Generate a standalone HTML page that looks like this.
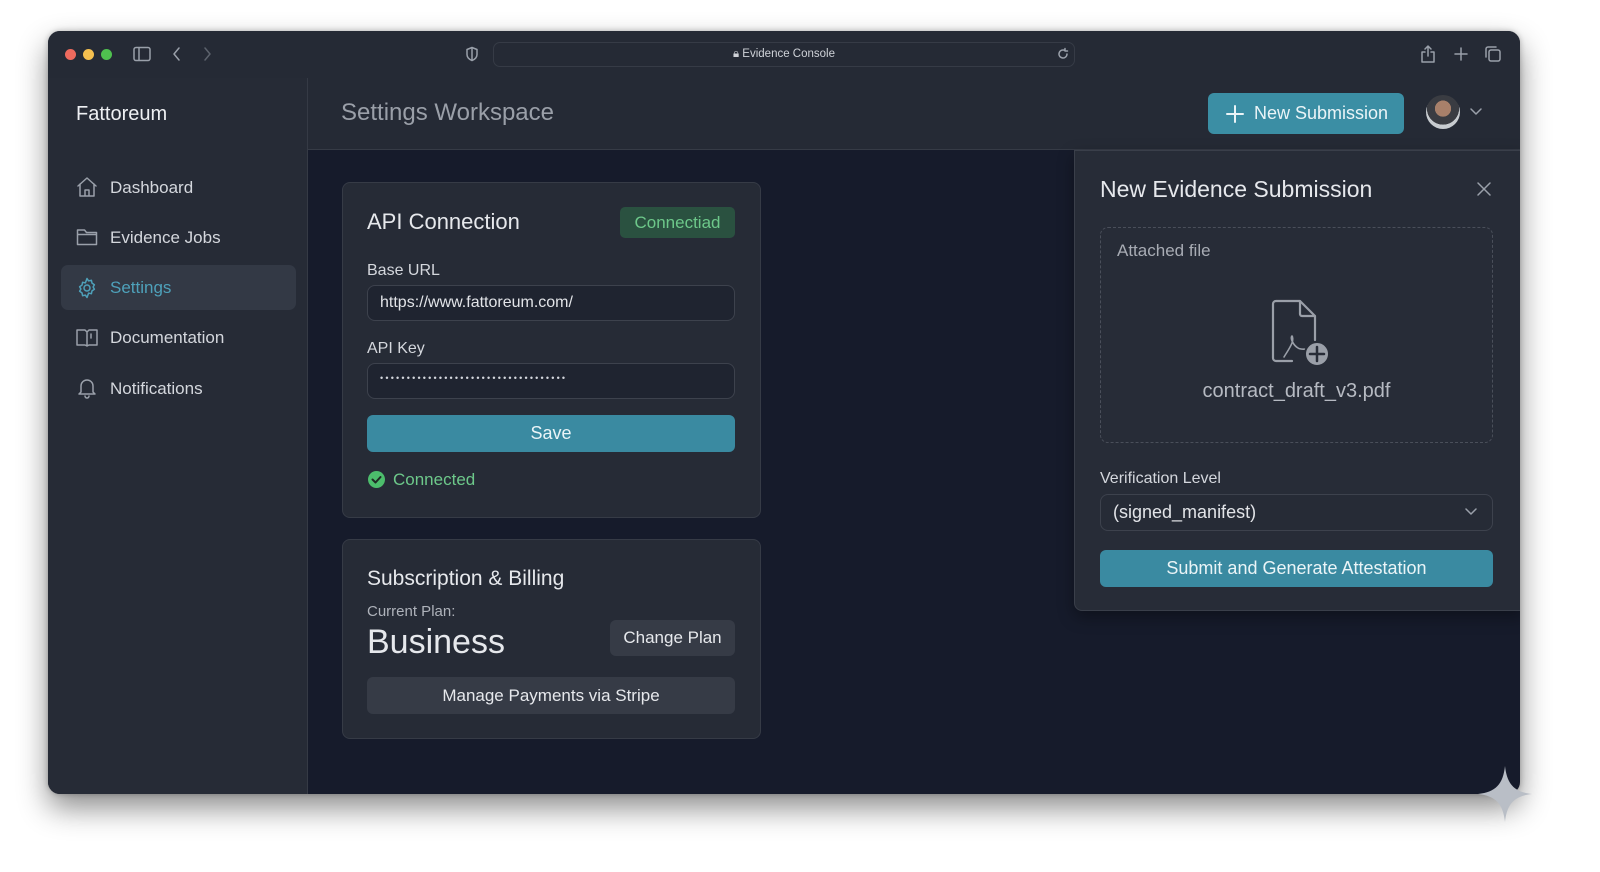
<!DOCTYPE html>
<html><head><meta charset="utf-8"><style>
*{box-sizing:border-box;margin:0;padding:0}
body{width:1600px;height:872px;background:#fff;font-family:"Liberation Sans",sans-serif;position:relative;overflow:hidden}
.a{position:absolute}
.win{left:48px;top:31px;width:1472px;height:763px;border-radius:12px;background:#161b2b;overflow:hidden;box-shadow:0 14px 30px rgba(0,0,0,.45),0 0 6px rgba(0,0,0,.25)}
.t{color:#d4d7dd}
.card{background:#262b36;border:1px solid #363b46;border-radius:8px}
.inp{background:#1f2430;border:1px solid #3d424d;border-radius:8px}
svg{position:absolute;fill:none;stroke:#9aa0aa;stroke-width:1.5;stroke-linecap:round;stroke-linejoin:round}
</style></head><body>
<div class="a win">
 <div class="a" style="left:0;top:0;width:1472px;height:119px;background:#252a35;border-bottom:1px solid #363b46"></div>
 <div class="a" style="left:0;top:47px;width:260px;height:716px;background:#262b36;border-right:1px solid #353a45"></div>
 <div class="a" style="left:17px;top:18px;width:11px;height:11px;border-radius:50%;background:#ee6a5e"></div>
 <div class="a" style="left:35px;top:18px;width:11px;height:11px;border-radius:50%;background:#f4bf4f"></div>
 <div class="a" style="left:53px;top:18px;width:11px;height:11px;border-radius:50%;background:#4fc14f"></div>
 <svg style="left:85px;top:15px" width="18" height="16"><rect x="1" y="1.5" width="16" height="13" rx="2"/><line x1="6" y1="2" x2="6" y2="14"/></svg>
 <svg style="left:123px;top:15px" width="12" height="16"><path d="M8 2L3 8l5 6"/></svg>
 <svg style="left:153px;top:15px" width="12" height="16"><path d="M4 2l5 6-5 6" stroke="#5c626c"/></svg>
 <svg style="left:417px;top:15px" width="14" height="16"><path d="M7 1.5L2 3.5v5c0 3 2.5 5 5 6 2.5-1 5-3 5-6v-5z"/><path d="M7 2v12" /></svg>
 <div class="a" style="left:445px;top:11px;width:582px;height:25px;border:1px solid #363b46;border-radius:7px"></div>
 <div class="a" style="left:445px;top:17px;width:582px;text-align:center;font-size:11.5px;color:#cfd2d8">🔒︎ Evidence Console</div>
 <svg style="left:1008px;top:16px" width="14" height="14"><path d="M11 7a4 4 0 1 1-2-3.5M9 1.5v2.5h2.5"/></svg>
 <svg style="left:1372px;top:13px" width="16" height="20"><path d="M8 2v10M5 5l3-3 3 3M5 8H2v10h12V8h-3"/></svg>
 <svg style="left:1405px;top:15px" width="16" height="16"><path d="M8 2v12M2 8h12"/></svg>
 <svg style="left:1436px;top:14px" width="18" height="18"><rect x="5" y="5" width="11" height="11" rx="2"/><path d="M2 12V4a2 2 0 0 1 2-2h8"/></svg>
 <div class="a t" style="left:28px;top:72px;font-size:20px;color:#eef0f3">Fattoreum</div>
 <div class="a" style="left:293px;top:68px;font-size:24px;color:#9a9fa8">Settings Workspace</div>
 <div class="a" style="left:1160px;top:62px;width:196px;height:41px;border-radius:6px;background:#3b8ea4;color:#eaf4f7;font-size:18px;line-height:41px;padding-left:46px">New Submission</div>
 <svg style="left:1177px;top:73px;stroke:#eaf4f7;stroke-width:2" width="20" height="20"><path d="M10 2v16M2 10h16"/></svg>
 <div class="a" style="left:1378px;top:64px;width:34px;height:34px;border-radius:50%;background:radial-gradient(circle at 50% 40%,#a8806a 0 30%,#3a3c42 31% 60%,#c8ccd0 61%)"></div>
 <svg style="left:1421px;top:76px" width="14" height="10"><path d="M2 2l5 5 5-5"/></svg>
 <svg style="left:28px;top:145px" width="22" height="22"><path d="M2 10L11 2l9 8M4 8v12h14V8M9 20v-6h4v6"/></svg>
 <div class="a t" style="left:62px;top:147px;font-size:17px">Dashboard</div>
 <svg style="left:28px;top:196px" width="22" height="20"><path d="M1.5 3h7l2 2.5h10v12h-19zM1.5 7.5h19"/></svg>
 <div class="a t" style="left:62px;top:197px;font-size:17px">Evidence Jobs</div>
 <div class="a" style="left:13px;top:234px;width:235px;height:45px;border-radius:7px;background:#333945"></div>
 <svg style="left:28px;top:246px;stroke:#4ea1ba" width="22" height="22"><circle cx="11" cy="11" r="3"/><path d="M11 1.5l1.6 2.4 2.8-.6.6 2.8 2.4 1.6-1.3 2.3 1.3 2.3-2.4 1.6-.6 2.8-2.8-.6L11 20.5l-1.6-2.4-2.8.6-.6-2.8-2.4-1.6L4.9 12 3.6 9.7 6 8.1l.6-2.8 2.8.6z"/></svg>
 <div class="a" style="left:62px;top:247px;font-size:17px;color:#4ea1ba">Settings</div>
 <svg style="left:27px;top:297px" width="24" height="20"><path d="M2 2h8l2 2 2-2h8v15h-8l-2 1-2-1H2zM12 4v14M16 6v4"/></svg>
 <div class="a t" style="left:62px;top:297px;font-size:17px">Documentation</div>
 <svg style="left:28px;top:346px" width="22" height="22"><path d="M5 15V9a6 6 0 0 1 12 0v6l2 2H3zM9 19a2 2 0 0 0 4 0"/></svg>
 <div class="a t" style="left:62px;top:348px;font-size:17px">Notifications</div>
 <div class="a card" style="left:294px;top:151px;width:419px;height:336px"></div>
 <div class="a" style="left:319px;top:178px;font-size:22px;color:#e6e8ec">API Connection</div>
 <div class="a" style="left:572px;top:176px;width:115px;height:31px;border-radius:5px;background:#2a5140;color:#6dc88a;font-size:17px;line-height:31px;text-align:center">Connectiad</div>
 <div class="a t" style="left:319px;top:231px;font-size:16px">Base URL</div>
 <div class="a inp" style="left:319px;top:254px;width:368px;height:36px"></div>
 <div class="a" style="left:332px;top:263px;font-size:16px;color:#e2e4e8">https://www.fattoreum.com/</div>
 <div class="a t" style="left:319px;top:309px;font-size:16px">API Key</div>
 <div class="a inp" style="left:319px;top:332px;width:368px;height:36px"></div>
 <div class="a" style="left:332px;top:342px;font-size:9px;letter-spacing:2.2px;color:#d4d7dd;white-space:nowrap">•••••••••••••••••••••••••••••••••••</div>
 <div class="a" style="left:319px;top:384px;width:368px;height:37px;border-radius:6px;background:#3a8aa1;color:#eaf4f7;font-size:18px;line-height:37px;text-align:center">Save</div>
 <div class="a" style="left:320px;top:440px;width:17px;height:17px;border-radius:50%;background:#4cbd6c"></div>
 <svg style="left:320px;top:440px;stroke:#1f2a25;stroke-width:2" width="17" height="17"><path d="M4.5 8.5l3 3 5-5.5"/></svg>
 <div class="a" style="left:345px;top:439px;font-size:17px;color:#6dc88a">Connected</div>
 <div class="a card" style="left:294px;top:508px;width:419px;height:200px"></div>
 <div class="a" style="left:319px;top:536px;font-size:21px;color:#e6e8ec">Subscription &amp; Billing</div>
 <div class="a" style="left:319px;top:572px;font-size:15px;color:#aeb2ba">Current Plan:</div>
 <div class="a" style="left:319px;top:592px;font-size:34px;color:#e6e8ec">Business</div>
 <div class="a" style="left:562px;top:589px;width:125px;height:36px;border-radius:6px;background:#363b46;color:#e6e8ec;font-size:17px;line-height:36px;text-align:center">Change Plan</div>
 <div class="a" style="left:319px;top:646px;width:368px;height:37px;border-radius:6px;background:#363b46;color:#e6e8ec;font-size:17px;line-height:37px;text-align:center">Manage Payments via Stripe</div>
 <div class="a" style="left:1026px;top:119px;width:450px;height:461px;background:#272c37;border:1px solid #3a3f4a;border-radius:0 0 0 8px;box-shadow:0 6px 16px rgba(0,0,0,.35)"></div>
 <div class="a" style="left:1052px;top:145px;font-size:23px;color:#e6e8ec">New Evidence Submission</div>
 <svg style="left:1428px;top:150px" width="16" height="16"><path d="M2 2l12 12M14 2L2 14"/></svg>
 <div class="a" style="left:1052px;top:196px;width:393px;height:216px;border:1px dashed #4a4f5a;border-radius:8px"></div>
 <div class="a" style="left:1069px;top:210px;font-size:17px;color:#a8acb4">Attached file</div>
 <svg style="left:1222px;top:268px;stroke:#9a9fa8;stroke-width:2.2" width="62" height="72"><path d="M22 62H6a3 3 0 0 1-3-3V5a3 3 0 0 1 3-3h24l15 15v24M30 2v13a2 2 0 0 0 2 2h13"/><path d="M14 58c3-5 6-9 8-14 1-3 1-6 0-7-2 2 1 9 6 12 3 2 8 1 10 1" stroke-width="1.6"/><circle cx="47" cy="55" r="12" fill="#9a9fa8" stroke="#272c37" stroke-width="2"/><path d="M47 48v14M40 55h14" stroke="#272c37" stroke-width="2.5"/></svg>
 <div class="a" style="left:1052px;top:349px;width:393px;text-align:center;font-size:20px;color:#b6bac2">contract_draft_v3.pdf</div>
 <div class="a t" style="left:1052px;top:439px;font-size:16px">Verification Level</div>
 <div class="a inp" style="left:1052px;top:463px;width:393px;height:37px;background:#262b36"></div>
 <div class="a" style="left:1065px;top:471px;font-size:18px;color:#e2e4e8">(signed_manifest)</div>
 <svg style="left:1416px;top:476px" width="14" height="10"><path d="M2 2l5 5 5-5"/></svg>
 <div class="a" style="left:1052px;top:519px;width:393px;height:37px;border-radius:6px;background:#3a8aa1;color:#eaf4f7;font-size:18px;line-height:37px;text-align:center">Submit and Generate Attestation</div>
</div>
<svg style="left:1478px;top:766px;fill:#b9bec6;stroke:none" width="54" height="56"><path d="M27 0C29 18 36 26 54 28 36 30 29 38 27 56 25 38 18 30 0 28 18 26 25 18 27 0z"/></svg>
</body></html>
